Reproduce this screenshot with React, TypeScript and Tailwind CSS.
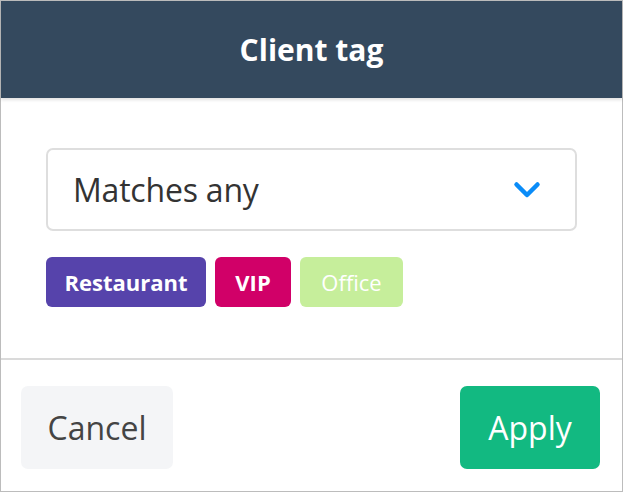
const tags = [
  { label: "Restaurant", bg: "bg-[#5643ab]", w: "w-[160px]", weight: "font-bold" },
  { label: "VIP", bg: "bg-[#d10068]", w: "w-[76px]", weight: "font-bold" },
  { label: "Office", bg: "bg-[#c6ee9b]", w: "w-[103px]", weight: "font-normal" },
]

function Chevron() {
  return (
    <svg width="28" height="18" viewBox="0 0 28 18" fill="none">
      <path d="M3.5 3.5 L14 14 L24.5 3.5" stroke="#0a8cf8" strokeWidth="4.5" strokeLinecap="round" strokeLinejoin="round" />
    </svg>
  )
}

export default function App() {
  return (
    <div className="w-[623px] h-[492px] border border-[#bcbcbc] bg-white flex flex-col font-['Open_Sans',sans-serif]">
      <div className="h-[97px] shrink-0 bg-[#34495e] flex items-center justify-center shadow-[0_2px_3px_rgba(0,0,0,0.12)] relative">
        <h1 className="text-white text-[30px] font-bold">Client tag</h1>
      </div>

      <div className="pt-[50px] px-[45px] pb-[51px]">
        <div className="h-[83px] border-2 border-[#dedede] rounded-[7px] flex items-center justify-between pl-[25px] pr-[34px]">
          <span className="text-[32px] text-[#333] tracking-[-0.2px]">Matches any</span>
          <Chevron />
        </div>

        <div className="flex gap-[9px] mt-[26px]">
          {tags.map((t) => (
            <span
              key={t.label}
              className={`h-[50px] ${t.w} ${t.bg} ${t.weight} rounded-[6px] flex items-center justify-center text-white text-[22px]`}
            >
              {t.label}
            </span>
          ))}
        </div>
      </div>

      <div className="border-t-2 border-[#dadada] flex justify-between items-start pt-[26px] pl-[20px] pr-[22px]">
        <button className="w-[152px] h-[83px] bg-[#f4f5f7] rounded-[7px] text-[32px] text-[#444]">Cancel</button>
        <button className="w-[140px] h-[83px] bg-[#12b981] rounded-[7px] text-[32px] text-white">Apply</button>
      </div>
    </div>
  )
}
